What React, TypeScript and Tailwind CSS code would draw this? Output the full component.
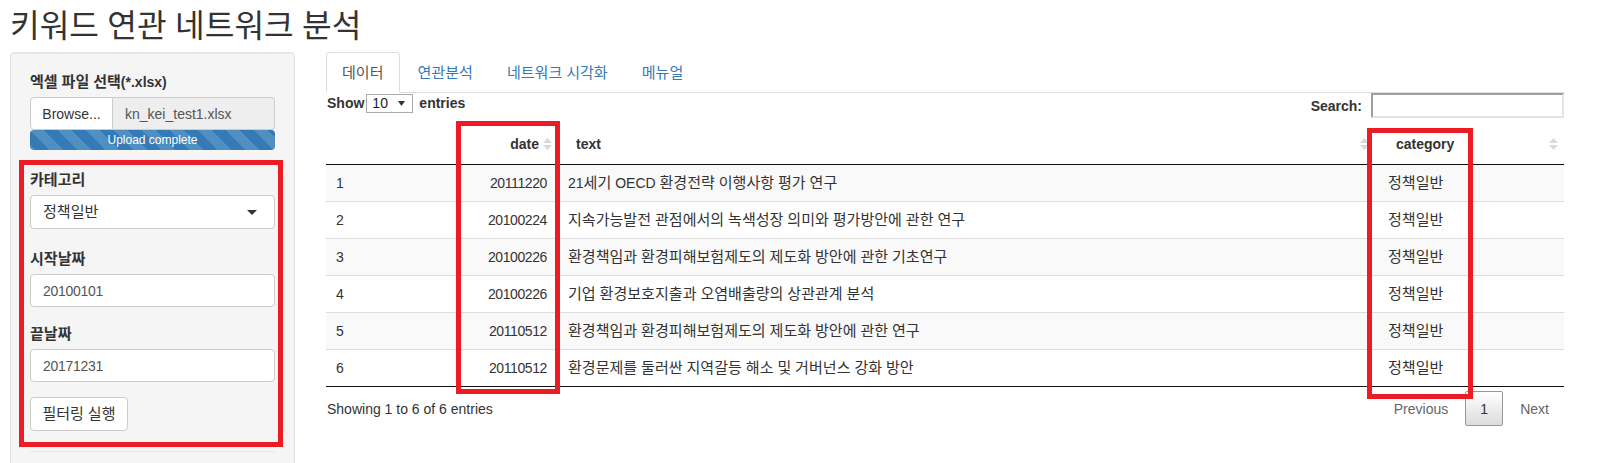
import React from "react";

const rows = [
  ["1", "20111220", "21세기 OECD 환경전략 이행사항 평가 연구"],
  ["2", "20100224", "지속가능발전 관점에서의 녹색성장 의미와 평가방안에 관한 연구"],
  ["3", "20100226", "환경책임과 환경피해보험제도의 제도화 방안에 관한 기초연구"],
  ["4", "20100226", "기업 환경보호지출과 오염배출량의 상관관계 분석"],
  ["5", "20110512", "환경책임과 환경피해보험제도의 제도화 방안에 관한 연구"],
  ["6", "20110512", "환경문제를 둘러싼 지역갈등 해소 및 거버넌스 강화 방안"],
];

function K({ t }: { t: string }) {
  const parts = t.split(/([\uAC00-\uD7A3]+)/);
  return (
    <>
      {parts.map((p, i) =>
        /[\uAC00-\uD7A3]/.test(p) ? (
          <span key={i} className="text-[1.075em]">
            {p}
          </span>
        ) : (
          <React.Fragment key={i}>{p}</React.Fragment>
        )
      )}
    </>
  );
}

function SortIcon() {
  return (
    <svg width="9" height="12" viewBox="0 0 9 12" className="shrink-0">
      <polygon points="4.5,0 9,5 0,5" fill="#d9d9d9" />
      <polygon points="0,7 9,7 4.5,12" fill="#d9d9d9" />
    </svg>
  );
}

export default function App() {
  return (
    <div className="relative w-[1609px] h-[463px] overflow-hidden bg-white text-[#333] text-[14px] leading-[20px] font-['Liberation_Sans','Noto_Sans_CJK_KR',sans-serif]">
      <h2 className="h-[52px] flex items-center pl-[10px] text-[30px] leading-[33px] font-normal">
        <span>
          <K t="키워드 연관 네트워크 분석" />
        </span>
      </h2>
      <div className="flex items-start pl-[10px]">
        {/* Sidebar well */}
        <div className="relative w-[285px] h-[470px] shrink-0 bg-[#f5f5f5] border border-[#e3e3e3] rounded-[4px] px-[19px] pt-[19px] shadow-[inset_0_1px_1px_rgba(0,0,0,0.05)]">
          <div className="font-bold h-[20px] mb-[5px]">
            <K t="엑셀 파일 선택(*.xlsx)" />
          </div>
          <div className="flex h-[33px]">
            <div className="w-[83px] flex items-center justify-center bg-white border border-[#ccc] rounded-l-[4px]">
              Browse...
            </div>
            <div className="flex-1 flex items-center pl-[12px] bg-[#eee] border border-l-0 border-[#ccc] rounded-r-[4px] text-[#555]">
              kn_kei_test1.xlsx
            </div>
          </div>
          <div className="h-[20px] rounded-[4px] bg-[#337ab7] bg-[linear-gradient(45deg,rgba(255,255,255,.15)_25%,transparent_25%,transparent_50%,rgba(255,255,255,.15)_50%,rgba(255,255,255,.15)_75%,transparent_75%,transparent)] bg-[length:28px_28px] text-white text-[12px] leading-[20px] text-center">
            Upload complete
          </div>

          <div className="mt-[20px]">
            <div className="font-bold h-[20px] mb-[5px]">
              <K t="카테고리" />
            </div>
            <div className="h-[34px] mb-[20px] flex items-center justify-between bg-white border border-[#ccc] rounded-[4px] pl-[12px] pr-[17px]">
              <span>
                <K t="정책일반" />
              </span>
              <svg width="10" height="5" viewBox="0 0 10 5">
                <polygon points="0,0 10,0 5,5" fill="#333" />
              </svg>
            </div>
            <div className="font-bold h-[20px] mb-[5px]">
              <K t="시작날짜" />
            </div>
            <div className="h-[33px] mb-[17px] flex items-center bg-white border border-[#ccc] rounded-[4px] pl-[12px] text-[#555] tracking-[-0.3px]">
              20100101
            </div>
            <div className="font-bold h-[20px] mb-[5px]">
              <K t="끝날짜" />
            </div>
            <div className="h-[33px] mb-[15px] flex items-center bg-white border border-[#ccc] rounded-[4px] pl-[12px] text-[#555] tracking-[-0.3px]">
              20171231
            </div>
            <div className="w-[98px] h-[34px] flex items-center justify-center bg-white border border-[#ccc] rounded-[4px]">
              <span>
                <K t="필터링 실행" />
              </span>
            </div>
          </div>
          <div className="mt-[20px] border-t border-[#e8e8e8]" />
          <div className="absolute left-[8px] top-[107px] w-[264px] h-[287px] border-[5px] border-[#ed1c24] pointer-events-none" />
        </div>

        {/* Main panel */}
        <div className="relative ml-[31px] w-[1238px] shrink-0">
          <div className="flex items-end h-[41px] border-b border-[#ddd]">
            <div className="h-[41px] -mb-px px-[15px] flex items-center border border-[#ddd] border-b-white bg-white rounded-t-[4px] text-[#555] mr-[2px]">
              <span>
                <K t="데이터" />
              </span>
            </div>
            <div className="h-[41px] -mb-px px-[15px] flex items-center border border-transparent text-[#337ab7] mr-[2px]">
              <span>
                <K t="연관분석" />
              </span>
            </div>
            <div className="h-[41px] -mb-px px-[15px] flex items-center border border-transparent text-[#337ab7] mr-[2px]">
              <span>
                <K t="네트워크 시각화" />
              </span>
            </div>
            <div className="h-[41px] -mb-px px-[15px] flex items-center border border-transparent text-[#337ab7]">
              <span>
                <K t="메뉴얼" />
              </span>
            </div>
          </div>

          <div className="flex justify-between items-start h-[31px]">
            <div className="flex items-center h-[20px] font-bold pl-[1px]">
              <span>Show</span>
              <div className="ml-[2px] w-[47px] h-[19px] flex items-center justify-between border border-[#aaa] bg-white pl-[5px] pr-[7px] font-normal">
                <span className="text-[#222]">10</span>
                <svg width="7" height="5" viewBox="0 0 7 5">
                  <polygon points="0,0 7,0 3.5,5" fill="#333" />
                </svg>
              </div>
              <span className="ml-[6px]">entries</span>
            </div>
            <div className="flex items-center h-[25px] font-bold">
              <span>Search:</span>
              <div className="ml-[9px] w-[193px] h-[25px] border-2 border-t-[#a0a0a0] border-l-[#a0a0a0] border-b-[#e3e3e3] border-r-[#e3e3e3] bg-white" />
            </div>
          </div>

          {/* Table */}
          <div>
            <div className="grid grid-cols-[120px_112px_817px_189px] h-[41px] border-b border-[#111] font-bold">
              <div />
              <div className="flex items-center justify-end pr-[6px] gap-[4px]">
                <span>date</span>
                <SortIcon />
              </div>
              <div className="flex items-center justify-between pl-[18px] pr-[6px]">
                <span>text</span>
                <SortIcon />
              </div>
              <div className="flex items-center justify-between pl-[21px] pr-[6px]">
                <span>category</span>
                <SortIcon />
              </div>
            </div>
            <div className="border-b border-[#111]">
              {rows.map((r, i) => (
                <div
                  key={r[0]}
                  className={
                    "grid grid-cols-[120px_112px_817px_189px] " +
                    (i === 0 ? "h-[36px] " : "h-[37px] border-t border-[#ddd] ") +
                    (i % 2 === 0 ? "bg-[#f9f9f9]" : "bg-white")
                  }
                >
                  <div className="flex items-center pl-[10px]">{r[0]}</div>
                  <div className="flex items-center justify-end pr-[11px] tracking-[-0.4px]">{r[1]}</div>
                  <div className="flex items-center pl-[10px]">
                    <span>
                      <K t={r[2]} />
                    </span>
                  </div>
                  <div className="flex items-center pl-[13px]">
                    <span>
                      <K t="정책일반" />
                    </span>
                  </div>
                </div>
              ))}
            </div>
          </div>

          <div className="flex justify-between items-center mt-[4px] h-[35px]">
            <div className="pl-[1px]">Showing 1 to 6 of 6 entries</div>
            <div className="flex items-center">
              <div className="px-[15px] h-[35px] flex items-center text-[#666]">Previous</div>
              <div className="ml-[2px] w-[38px] h-[35px] flex items-center justify-center border border-[#979797] rounded-[2px] bg-[linear-gradient(to_bottom,#fff_0%,#dcdcdc_100%)] text-[#333]">
                1
              </div>
              <div className="ml-[2px] px-[15px] h-[35px] flex items-center text-[#666]">Next</div>
            </div>
          </div>

          <div className="absolute left-[130px] top-[69px] w-[104px] h-[273px] border-[5px] border-[#ed1c24] pointer-events-none" />
          <div className="absolute left-[1041px] top-[76px] w-[106px] h-[271px] border-[5px] border-[#ed1c24] pointer-events-none" />
        </div>
      </div>
    </div>
  );
}
